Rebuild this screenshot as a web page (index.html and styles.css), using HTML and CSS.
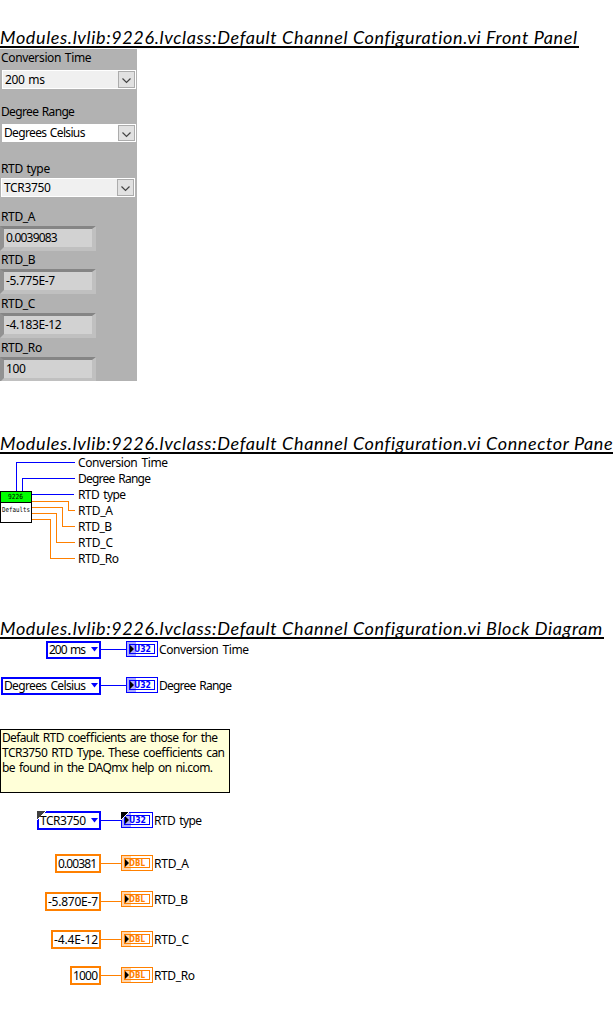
FILE: index.html
```html
<!DOCTYPE html>
<html lang="en">
<head>
<meta charset="utf-8">
<title>Default Channel Configuration.vi</title>
<link rel="stylesheet" href="styles.css">
</head>
<body>
<section class="front">
  <h2 class="title"><span>Modules.lvlib:9226.lvclass:Default Channel Configuration.vi Front Panel</span></h2>
  <div class="panel">
    <div class="field"><label>Conversion Time</label>
      <div class="combo"><span class="value">200 ms</span><span class="drop"><svg width="15" height="15"><path d="M3.5 6.500l4 4 4-4" /></svg></span></div></div>
    <div class="field degree"><label class="tight">Degree Range</label>
      <div class="combo active"><span class="value tight">Degrees Celsius</span><span class="drop"><svg width="15" height="15"><path d="M3.5 6.500l4 4 4-4" /></svg></span></div></div>
    <div class="field rtd"><label>RTD type</label>
      <div class="combo"><span class="value">TCR3750</span><span class="drop"><svg width="15" height="15"><path d="M3.5 6.500l4 4 4-4" /></svg></span></div></div>
    <div class="number first"><label>RTD_A</label><div class="box long">0.0039083</div></div>
    <div class="number"><label>RTD_B</label><div class="box">-5.775E-7</div></div>
    <div class="number gap"><label>RTD_C</label><div class="box">-4.183E-12</div></div>
    <div class="number gap"><label>RTD_Ro</label><div class="box">100</div></div>
  </div>
</section>
<section class="connector">
  <h2 class="title"><span>Modules.lvlib:9226.lvclass:Default Channel Configuration.vi Connector Pane</span></h2>
  <svg class="canvas" width="613" height="156" viewBox="0 454 613 156">
    <g class="wire int"><path d="M16.5 491V462.500H75M22.500 491V478.500H75M32 494.500H74"/></g>
    <g class="wire dbl"><path d="M32 501.500H68.500V510.500H75M32 507.500H62.500V526.500H75M32 513.500H56.500V542.500H75M32 519.500H50.500V558.500H75"/></g>
    <rect x=".5" y="491.500" width="31" height="31" fill="#fff" stroke="#000"/>
    <rect x="1" y="492" width="30" height="10" fill="#0f0"/><path d="M0 502.500H32" stroke="#000"/>
    <text class="pixel" x="8" y="499" textLength="15" lengthAdjust="spacingAndGlyphs">9226</text>
    <text class="pixel" x="2" y="512" textLength="28" lengthAdjust="spacingAndGlyphs">Defaults</text>
    <g class="label">
      <text x="78" y="467" textLength="90">Conversion Time</text>
      <text x="78" y="483" textLength="73">Degree Range</text>
      <text x="78" y="499" textLength="48">RTD type</text>
      <text x="78" y="515" textLength="35">RTD_A</text>
      <text x="78" y="531" textLength="34">RTD_B</text>
      <text x="78" y="547" textLength="35">RTD_C</text>
      <text x="78" y="563" textLength="41">RTD_Ro</text>
    </g>
  </svg>
</section>
<section class="diagram">
  <h2 class="title"><span>Modules.lvlib:9226.lvclass:Default Channel Configuration.vi Block Diagram</span></h2>
  <svg class="canvas" width="613" height="371" viewBox="0 639 613 371">
    <defs>
      <g id="terminal">
        <rect x=".5" y=".5" width="31" height="15" fill="#fff" stroke="currentColor"/>
        <rect x="3.500" y="3.500" width="25" height="9" fill="none" stroke="currentColor"/>
        <rect x="1" y="1" width="9" height="14" fill="currentColor" opacity=".33"/>
      </g>
      <path id="arrow" d="M4 4L8 8 4 12Z" fill="#000"/>
    </defs>
    <g class="wire int"><path d="M101 649.500H126M101 685.500H126M101 820.500H121"/></g>
    <g class="wire dbl"><path d="M101 863.500H121M101 901.500H121M101 939.500H121M101 975.500H121"/></g>
    <g class="constant int">
      <rect x="47" y="642" width="53" height="16"/>
      <rect x="2" y="678" width="98" height="16"/>
      <rect x="38" y="812" width="62" height="17"/>
    </g>
    <g fill="#00f"><path d="M91 647H98L94.500 651.500Z"/><path d="M91 683H98L94.500 687.500Z"/><path d="M91 818H98L94.500 822.500Z"/></g>
    <g class="constant dbl">
      <rect x="56" y="855" width="44" height="17"/>
      <rect x="46" y="893" width="54" height="17"/>
      <rect x="52" y="931" width="48" height="17"/>
      <rect x="71" y="967" width="29" height="17"/>
    </g>
    <path d="M37 811H46L37 820Z" fill="#404040"/><path d="M37 820L46 811" stroke="#fff"/>
    <g class="int type">
      <use href="#terminal" x="126" y="641"/><text x="134" y="652" textLength="17" lengthAdjust="spacingAndGlyphs">U32</text><use href="#arrow" x="126" y="641"/>
      <use href="#terminal" x="126" y="677"/><text x="134" y="688" textLength="17" lengthAdjust="spacingAndGlyphs">U32</text><use href="#arrow" x="126" y="677"/>
      <use href="#terminal" x="121" y="812"/><text x="129" y="823" textLength="17" lengthAdjust="spacingAndGlyphs">U32</text><use href="#arrow" x="121" y="812"/>
    </g>
    <path d="M121 812H129L121 820Z"/><path d="M121 820L129 812" stroke="#fff"/>
    <g class="dbl type">
      <use href="#terminal" x="121" y="855"/><text x="129" y="866" textLength="16" lengthAdjust="spacingAndGlyphs">DBL</text><use href="#arrow" x="121" y="855"/>
      <use href="#terminal" x="121" y="891"/><text x="129" y="902" textLength="16" lengthAdjust="spacingAndGlyphs">DBL</text><use href="#arrow" x="121" y="891"/>
      <use href="#terminal" x="121" y="931"/><text x="129" y="942" textLength="16" lengthAdjust="spacingAndGlyphs">DBL</text><use href="#arrow" x="121" y="931"/>
      <use href="#terminal" x="121" y="967"/><text x="129" y="978" textLength="16" lengthAdjust="spacingAndGlyphs">DBL</text><use href="#arrow" x="121" y="967"/>
    </g>
    <rect x=".5" y="729.500" width="229" height="63" fill="#ffffd8" stroke="#000"/>
    <g class="label">
      <text x="49" y="654" textLength="37">200 ms</text>
      <text x="4" y="690" textLength="82">Degrees Celsius</text>
      <text x="40" y="825" textLength="46">TCR3750</text>
      <text x="58" y="868" textLength="39">0.00381</text>
      <text x="48" y="906" textLength="50">-5.870E-7</text>
      <text x="54" y="944" textLength="44">-4.4E-12</text>
      <text x="73" y="980" textLength="25">1000</text>
      <text x="159" y="654" textLength="90">Conversion Time</text>
      <text x="159" y="690" textLength="73">Degree Range</text>
      <text x="154" y="825" textLength="48">RTD type</text>
      <text x="154" y="868" textLength="35">RTD_A</text>
      <text x="154" y="904" textLength="34">RTD_B</text>
      <text x="154" y="944" textLength="35">RTD_C</text>
      <text x="154" y="980" textLength="41">RTD_Ro</text>
      <text x="2" y="742" textLength="216">Default RTD coefficients are those for the</text>
      <text x="2" y="757" textLength="223">TCR3750 RTD Type. These coefficients can</text>
      <text x="2" y="772" textLength="211">be found in the DAQmx help on ni.com.</text>
    </g>
  </svg>
</section>
</body>
</html>
```

FILE: styles.css
```css
* { box-sizing: border-box; }
body { margin: 0; width: 613px; background: #fff; color: #000; font: 12px/16px "Noto Sans", "Open Sans", sans-serif; overflow: hidden; }
svg { display: block; }
.title { margin: 0; height: 24px; border-bottom: 2px solid #000; overflow: hidden; width: 613px; font: italic 400 18px/26px Lato, sans-serif; letter-spacing: .62px; font-variant-ligatures: none; white-space: nowrap; }
.front { padding-top: 24px; height: 430px; }
.front .title { width: 579px; }
.connector { height: 180px; }
.diagram .title { width: 604px; height: 29px; padding-top: 5px; }
.panel { width: 137px; height: 332px; margin-top: 1px; padding-top: 1px; background: #b2b2b2; overflow: hidden; letter-spacing: -.35px; word-spacing: 1px; }
label { display: block; height: 16px; padding-left: 1px; }
.tight { letter-spacing: -.65px; }
.field { height: 54px; }
.combo { display: flex; justify-content: space-between; width: 134px; height: 19px; margin: 4px 0 0 2px; padding: 1px; border: 0; background: #f0f0f0; box-shadow: inset 0 0 0 1px #fff; line-height: 17px; }
.active { background: #fff; height: 18px; line-height: 16px; }
.active .value { padding-left: 1px; }
.value { padding-left: 2px; }
.drop { width: 17px; border: 1px solid #acacac; background: #e1e1e1; }
.drop path { fill: none; stroke: #444; stroke-width: 1.2; }
.degree { height: 57px; }
.rtd { height: 48px; }
.rtd .combo { margin: 1px 0 0 1px; }
.number { height: 43px; }
.number.gap { height: 44px; padding-top: 1px; }
.box { width: 96px; height: 25px; margin-top: 1px; padding-left: 2px; border: 4px solid; border-width: 3px 4px 4px; border-color: #858585 #c0c0c0 #c0c0c0 #929292; background: #d2d2d2; line-height: 18px; }
.long { letter-spacing: -.8px; }
.wire { fill: none; stroke: currentColor; shape-rendering: crispEdges; }
.int { color: #00f; }
.dbl { color: #ff8000; }
.constant { fill: #fff; stroke: currentColor; stroke-width: 2; }
.label { font: 12px "Noto Sans", "Open Sans", sans-serif; word-spacing: 1.5px; }
.pixel { font: 7px "DejaVu Sans Mono", monospace; }
.type text { fill: currentColor; font: bold 8px "DejaVu Sans", sans-serif; }
```
